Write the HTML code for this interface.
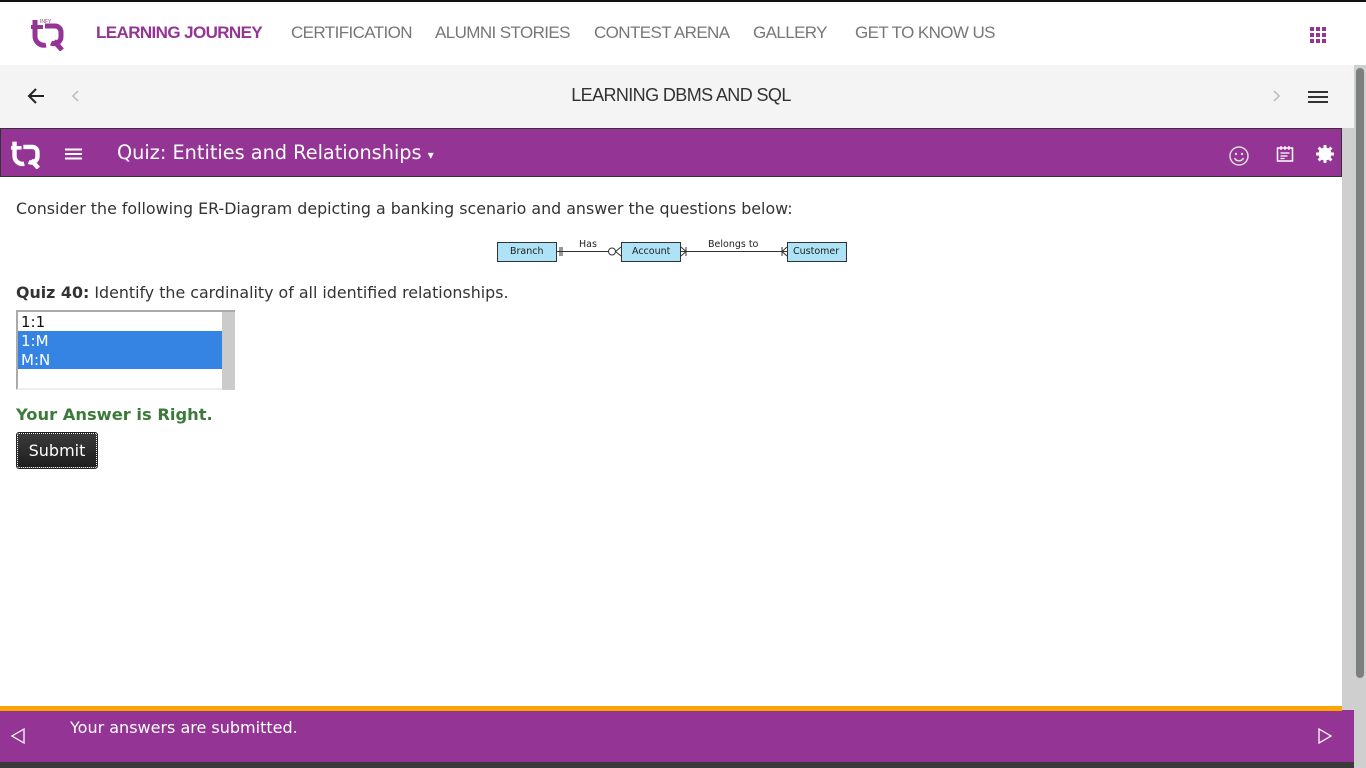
<!DOCTYPE html>
<html><head><style>
*{margin:0;padding:0;box-sizing:border-box}
body{width:1366px;height:768px;overflow:hidden;position:relative;background:#fff;font-family:"Liberation Sans",sans-serif}
.top{position:absolute;left:0;top:0;width:1366px;height:65px;background:#fff;border-top:2px solid #111}
.nav{position:absolute;top:21px;font-size:17px;color:#777;letter-spacing:-0.6px}
.gray{position:absolute;left:0;top:65px;width:1354px;height:63px;background:#f4f4f4}
.osb{position:absolute;left:1354px;top:65px;width:12px;height:703px;background:#cfcfcf}
.isb{position:absolute;left:1342px;top:128px;width:12px;height:582px;background:#cfcfcf}
.qbar{position:absolute;left:0;top:128px;width:1342px;height:49px;background:#943494;border:1px solid #333}
.dv{font-family:"DejaVu Sans","Liberation Sans",sans-serif}
</style></head><body>
<div class="top">
<svg style="position:absolute;left:30px;top:15px" width="36" height="34" viewBox="0 0 36 34">
<path d="M5 3v16a9 9 0 0 0 11 9" stroke="#943494" stroke-width="5" fill="none"/>
<path d="M1 10h12" stroke="#943494" stroke-width="4"/>
<path d="M15 9h10a6 6 0 0 1 6 6v5a7 7 0 0 1-10 6" stroke="#943494" stroke-width="5" fill="none"/>
<path d="M24 24l8 9" stroke="#943494" stroke-width="5"/>
<text x="10" y="6" font-size="5" fill="#943494" font-family="Liberation Sans">INFY</text>
</svg>
<div class="nav" style="left:96px;color:#943494;font-weight:bold">LEARNING JOURNEY</div>
<div class="nav" style="left:291px">CERTIFICATION</div>
<div class="nav" style="left:435px">ALUMNI STORIES</div>
<div class="nav" style="left:594px">CONTEST ARENA</div>
<div class="nav" style="left:753px">GALLERY</div>
<div class="nav" style="left:855px">GET TO KNOW US</div>
<svg style="position:absolute;left:1310px;top:25px" width="16" height="16"><g fill="#943494"><rect x="0" y="0" width="4" height="4"/><rect x="6" y="0" width="4" height="4"/><rect x="12" y="0" width="4" height="4"/><rect x="0" y="6" width="4" height="4"/><rect x="6" y="6" width="4" height="4"/><rect x="12" y="6" width="4" height="4"/><rect x="0" y="12" width="4" height="4"/><rect x="6" y="12" width="4" height="4"/><rect x="12" y="12" width="4" height="4"/></g></svg>
</div>
<div class="gray">
<svg style="position:absolute;left:26px;top:22px" width="20" height="18"><path d="M18 9H3M10 2L3 9l7 7" stroke="#222" stroke-width="2" fill="none"/></svg>
<svg style="position:absolute;left:70px;top:24px" width="10" height="14"><path d="M8 2L3 7l5 5" stroke="#bbb" stroke-width="1.5" fill="none"/></svg>
<div style="position:absolute;left:0;width:1362px;top:20px;text-align:center;font-size:18px;color:#333;letter-spacing:-0.6px">LEARNING DBMS AND SQL</div>
<svg style="position:absolute;left:1272px;top:24px" width="10" height="14"><path d="M2 2l5 5-5 5" stroke="#bbb" stroke-width="1.5" fill="none"/></svg>
<svg style="position:absolute;left:1308px;top:25px" width="20" height="14"><path d="M0 2h20M0 7h20M0 12h20" stroke="#333" stroke-width="2"/></svg>
</div>
<div class="osb"><div style="position:absolute;left:2px;top:3px;width:8px;height:610px;background:#7b7f80;border-radius:4px"></div></div>
<div class="isb"></div>
<div class="qbar">
<svg style="position:absolute;left:9px;top:10px" width="32" height="30" viewBox="0 0 36 34"><path d="M5 3v16a9 9 0 0 0 11 9" stroke="#fff" stroke-width="5" fill="none"/><path d="M1 10h12" stroke="#fff" stroke-width="4"/><path d="M15 9h10a6 6 0 0 1 6 6v5a7 7 0 0 1-10 6" stroke="#fff" stroke-width="5" fill="none"/><path d="M24 24l8 9" stroke="#fff" stroke-width="5"/></svg>
<svg style="position:absolute;left:64px;top:19px" width="17" height="12"><path d="M0 1.5h17M0 6h17M0 10.5h17" stroke="#fff" stroke-width="2"/></svg>
<div class="dv" style="position:absolute;left:116px;top:12px;font-size:19.3px;color:#fff">Quiz: Entities and Relationships <span style="font-size:12px">▾</span></div>
<svg style="position:absolute;left:1227px;top:16px" width="22" height="22"><circle cx="11" cy="11" r="9" stroke="#ddd" stroke-width="1.5" fill="none"/><circle cx="8" cy="9" r="1.2" fill="#ddd"/><circle cx="14" cy="9" r="1.2" fill="#ddd"/><path d="M6.5 13a5 5 0 0 0 9 0" stroke="#ddd" stroke-width="1.5" fill="none"/></svg>
<svg style="position:absolute;left:1275px;top:16px" width="18" height="18"><rect x="1.5" y="3" width="15" height="13" stroke="#fff" stroke-width="1.5" fill="none"/><path d="M5 1v4M9 1v4M13 1v4M4.5 8h9M4.5 11h7M4.5 13.5h4" stroke="#fff" stroke-width="1.3"/></svg>
<svg style="position:absolute;left:1314px;top:15px" width="20" height="20"><circle cx="10" cy="10" r="6.5" fill="#fff"/><g stroke="#fff" stroke-width="3"><path d="M10 1v18M1 10h18M3.6 3.6l12.8 12.8M16.4 3.6L3.6 16.4"/></g></svg>
</div>
<div class="dv" style="position:absolute;left:16px;top:199px;font-size:15.85px;color:#333">Consider the following ER-Diagram depicting a banking scenario and answer the questions below:</div>
<svg style="position:absolute;left:490px;top:235px" width="370" height="30" font-family="DejaVu Sans" font-size="9.5">
<g fill="#aee2f6" stroke="#333"><rect x="7.5" y="7.5" width="59" height="19"/><rect x="131.5" y="7.5" width="59" height="19"/><rect x="297.5" y="7.5" width="59" height="19"/></g>
<text x="20" y="19" fill="#222">Branch</text><text x="142" y="19" fill="#222">Account</text><text x="303" y="19" fill="#222">Customer</text>
<text x="89" y="12" fill="#222">Has</text><text x="218" y="12" fill="#222">Belongs to</text>
<g stroke="#333" fill="none"><path d="M67 16.5h52M70 12v9M72 12v9"/><circle cx="122" cy="16.5" r="3.5" fill="#fff"/><path d="M125.5 16.5L131 12M125.5 16.5L131 21"/><path d="M191 16.5h106M191 12l5 4.5-5 4.5M196 12v9M297 12l-5 4.5 5 4.5M292 12v9"/></g>
</svg>
<div class="dv" style="position:absolute;left:16px;top:283px;font-size:15.85px;color:#333"><b>Quiz 40:</b> Identify the cardinality of all identified relationships.</div>
<div class="dv" style="position:absolute;left:16px;top:310px;width:219px;height:80px;border:2px solid #aaa;border-right:none;border-bottom-color:#eee;background:#fff;font-size:15px">
<div style="position:absolute;right:0;top:0;width:13px;height:78px;background:#cbcbcb"></div>
<div style="height:19px;padding-left:3px;color:#111;line-height:20px">1:1</div>
<div style="width:204px;height:19px;padding-left:3px;background:#3584e4;color:#fff;line-height:20px">1:M</div>
<div style="width:204px;height:19px;padding-left:3px;background:#3584e4;color:#fff;line-height:20px">M:N</div>
</div>
<div class="dv" style="position:absolute;left:16px;top:405px;font-size:16.3px;font-weight:bold;color:#3b7a3b">Your Answer is Right.</div>
<div class="dv" style="position:absolute;left:17px;top:433px;width:80px;height:35px;background:linear-gradient(#3a3a3a,#1e1e1e);border:1px dotted #fff;outline:1px solid #222;color:#fff;font-size:16px;text-align:center;line-height:33px;border-radius:2px">Submit</div>
<div style="position:absolute;left:0;top:706px;width:1342px;height:5px;background:#fca400"></div>
<div style="position:absolute;left:0;top:711px;width:1342px;height:51px;background:#943494">
<svg style="position:absolute;left:10px;top:16px" width="16" height="18"><path d="M14 2L2 9l12 7z" stroke="#fff" stroke-width="1.3" fill="none"/></svg>
<div class="dv" style="position:absolute;left:70px;top:7px;font-size:16px;color:#fff">Your answers are submitted.</div>
<svg style="position:absolute;left:1317px;top:16px" width="16" height="18"><path d="M2 2l12 7-12 7z" stroke="#fff" stroke-width="1.3" fill="none"/></svg>
</div>
<div style="position:absolute;left:1342px;top:710px;width:12px;height:52px;background:#943494"></div>
<div style="position:absolute;left:0;top:762px;width:1354px;height:6px;background:#3a3a3a"></div>
</body></html>
